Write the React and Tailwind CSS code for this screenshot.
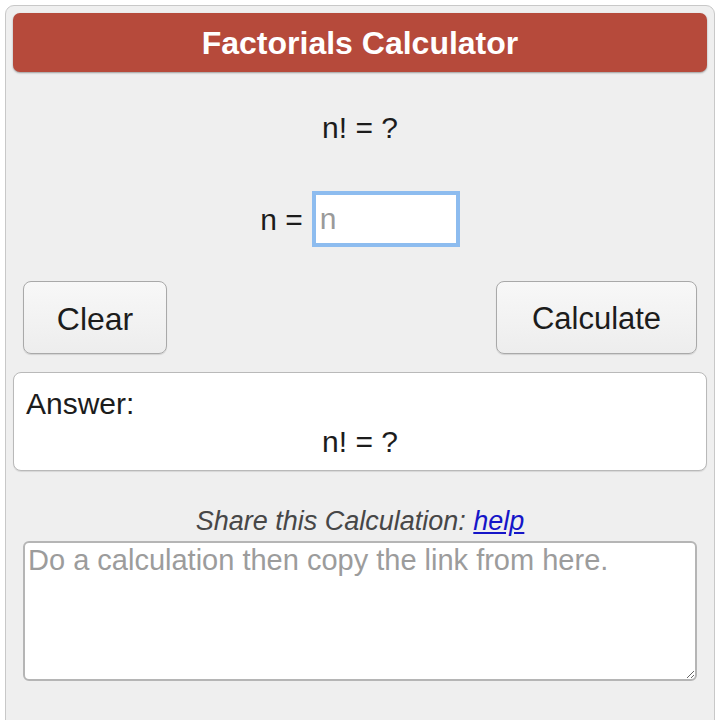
import React from 'react';

const App = () => {
  return (
    <div className="w-[720px] h-[720px] overflow-hidden bg-white pt-[5px] px-[5px] font-['Liberation_Sans',Arial,sans-serif] text-[#1c1c1c]">
      {/* Calculator panel */}
      <div className="min-h-[740px] rounded-t-[9px] border border-[#c8c8c8] bg-[#efefef] p-[7px]">
        {/* Title bar */}
        <div className="h-[59px] rounded-[7px] bg-[#b64a3b] shadow-[0_1px_2px_rgba(0,0,0,0.35)] flex items-center justify-center">
          <h1 className="text-white font-bold text-[32px] leading-none">Factorials Calculator</h1>
        </div>

        {/* Formula */}
        <div className="mt-[35px] h-[40px] flex items-center justify-center text-[30px]">n! = ?</div>

        {/* Input row */}
        <div className="mt-[44px] flex items-center justify-center">
          <span className="text-[30px] mr-[9px]">n =</span>
          <input
            type="text"
            placeholder="n"
            className="w-[148px] h-[56px] border-[4px] border-[#8dbcef] bg-white px-[4px] text-[30px] outline-none placeholder:text-[#9a9a9a] font-['Liberation_Sans',Arial,sans-serif]"
          />
        </div>

        {/* Buttons */}
        <div className="mt-[34px] px-[10px] flex items-center justify-between">
          <button className="w-[144px] h-[73px] rounded-[8px] border border-[#a9a9a9] bg-gradient-to-b from-[#f8f8f8] to-[#ededed] text-[32px] leading-none pt-[2px] shadow-[0_1px_1px_rgba(0,0,0,0.12)]">
            Clear
          </button>
          <button className="w-[201px] h-[73px] rounded-[8px] border border-[#a9a9a9] bg-gradient-to-b from-[#f8f8f8] to-[#ededed] text-[31px] leading-none pt-[2px] shadow-[0_1px_1px_rgba(0,0,0,0.12)]">
            Calculate
          </button>
        </div>

        {/* Answer */}
        <div className="mt-[18px] h-[99px] rounded-[8px] border border-[#b9b9b9] bg-white pl-[12px] pt-[12px] shadow-[0_1px_1px_rgba(0,0,0,0.1)]">
          <div className="text-[30px] leading-[38px]">Answer:</div>
          <div className="text-[30px] leading-[38px] text-center pr-[12px]">n! = ?</div>
        </div>

        {/* Share */}
        <div className="mt-[34px] h-[32px] flex items-center justify-center text-[27px] italic text-[#474747]">
          <span>Share this Calculation:&nbsp;</span>
          <a href="#" className="text-[#1515c8] underline">help</a>
        </div>
        <div className="mt-[4px] px-[10px]">
          <textarea
            placeholder="Do a calculation then copy the link from here."
            className="block w-full h-[140px] rounded-[6px] border-2 border-[#b5b5b5] bg-white px-[3px] pt-[1px] text-[29px] leading-[32px] outline-none placeholder:text-[#9c9c9c] font-['Liberation_Sans',Arial,sans-serif]"
          />
        </div>
      </div>
    </div>
  );
};

export default App;
